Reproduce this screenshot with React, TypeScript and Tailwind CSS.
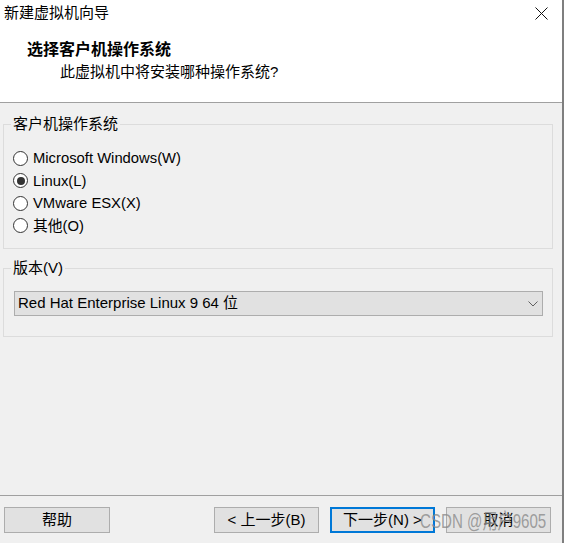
const font = { fontFamily: '"Liberation Sans", "Noto Sans CJK SC", sans-serif' };

const osOptions = [
  { label: "Microsoft Windows(W)", checked: false },
  { label: "Linux(L)", checked: true },
  { label: "VMware ESX(X)", checked: false },
  { label: "其他(O)", checked: false },
];

const Radio = ({ checked }: { checked: boolean }) => (
  <span className="flex h-[15px] w-[15px] shrink-0 items-center justify-center rounded-full border border-[#333333] bg-white">
    {checked && <span className="h-[8px] w-[8px] rounded-full bg-[#333333]" />}
  </span>
);

const Button = ({ children, focused }: { children: React.ReactNode; focused?: boolean }) => (
  <button
    className={
      focused
        ? "flex h-[26px] w-[105px] items-center justify-center border-2 border-[#0078d7] bg-[#e1e1e1] text-[15px] text-black"
        : "flex h-[26px] w-[105px] items-center justify-center border border-[#adadad] bg-[#e1e1e1] text-[15px] text-black"
    }
  >
    {children}
  </button>
);

export default function App() {
  return (
    <div className="relative flex h-[543px] w-[565px] bg-white text-black" style={font}>
      <div className="flex h-full w-[562px] flex-col bg-[#f0f0f0]">
        {/* header */}
        <div className="h-[102px] shrink-0 bg-white">
          <div className="flex items-start justify-between pr-[14px] pl-[4px] pt-[3px]">
            <span className="text-[15px] leading-[20px]">新建虚拟机向导</span>
            <svg width="13" height="13" viewBox="0 0 13 13" className="mt-[4px]">
              <path d="M0.5 0.5L12.5 12.5M12.5 0.5L0.5 12.5" stroke="#111" strokeWidth="1" fill="none" />
            </svg>
          </div>
          <div className="mt-[17px] pl-[27px] text-[16px] font-bold leading-[20px]">选择客户机操作系统</div>
          <div className="mt-[2px] pl-[60px] text-[15px] leading-[20px]">此虚拟机中将安装哪种操作系统?</div>
        </div>
        <div className="h-px shrink-0 bg-[#a0a0a0]" />

        {/* body */}
        <div className="flex-1 px-[3px] pr-[9px]">
          <fieldset className="mt-[11px] border border-[#dcdcdc] pb-[11px]">
            <legend className="ml-[7px] px-[2px] text-[15px] leading-[20px]">客户机操作系统</legend>
            <div className="mt-[13px] flex flex-col pl-[9px]">
              {osOptions.map((o) => (
                <div key={o.label} className="flex h-[22.5px] items-center gap-[5px] text-[14.8px]">
                  <Radio checked={o.checked} />
                  <span>{o.label}</span>
                </div>
              ))}
            </div>
          </fieldset>

          <fieldset className="mt-[9px] border border-[#dcdcdc] pb-[20px]">
            <legend className="ml-[7px] px-[2px] text-[15px] leading-[20px]">版本(V)</legend>
            <div className="mt-[13px] mr-[9px] ml-[10px] flex h-[25px] items-center justify-between border border-[#adadad] bg-[#e1e1e1] pr-[4px] pl-[3px] text-[15px]">
              <span>Red Hat Enterprise Linux 9 64 位</span>
              <svg width="10" height="6" viewBox="0 0 10 6">
                <path d="M0.5 0.5L5 5L9.5 0.5" stroke="#606060" strokeWidth="1" fill="none" />
              </svg>
            </div>
          </fieldset>
        </div>

        {/* footer */}
        <div className="h-px shrink-0 bg-[#a0a0a0]" />
        <div className="flex h-[47px] shrink-0 items-start justify-between pt-[11px] pr-[11px] pl-[4px]">
          <button className="flex h-[26px] w-[106px] items-center justify-center border border-[#adadad] bg-[#e1e1e1] text-[15px]">
            帮助
          </button>
          <div className="flex gap-[11px]">
            <Button>&lt; 上一步(B)</Button>
            <Button focused>下一步(N) &gt;</Button>
            <Button>取消</Button>
          </div>
        </div>
      </div>
      <div className="h-full w-[2px] bg-[#7f7f7f]" />

      {/* watermark */}
      <div className="pointer-events-none absolute top-[508px] left-[420px] origin-left scale-x-[0.72] text-[21px] leading-[26px] whitespace-nowrap text-[#8a8a8a]/80">
        CSDN @用户9605
      </div>
    </div>
  );
}
